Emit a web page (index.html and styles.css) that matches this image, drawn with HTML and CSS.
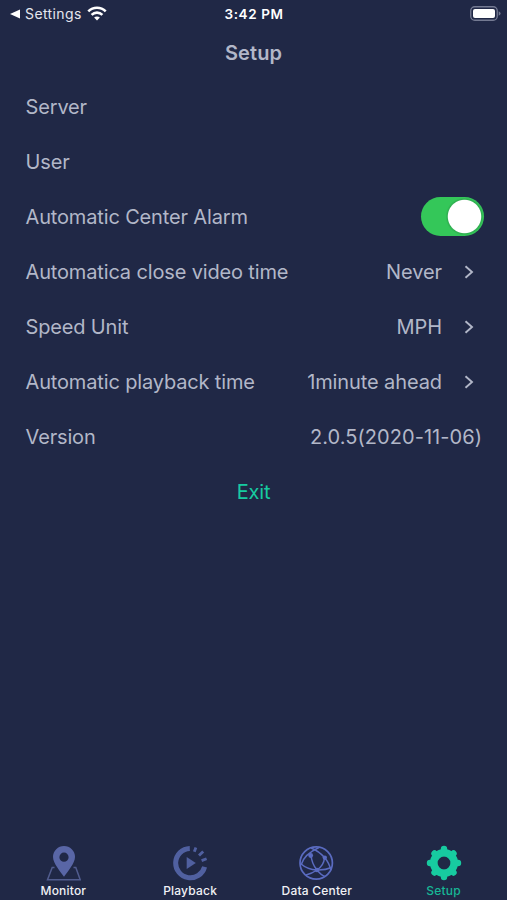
FILE: index.html
```html
<!DOCTYPE html>
<html lang="en">
<head>
    <meta charset="UTF-8">
    <meta name="viewport" content="width=device-width, initial-scale=1.0">
    <title>Setup</title>
    <link rel="stylesheet" href="styles.css">
</head>
<body>
    <!-- Status Bar -->
    <div class="status-bar">
        <div class="status-left">
            <svg class="back-icon" width="10" height="10" viewBox="0 0 10 10"><path d="M0 5L10 0.5V9.5Z" fill="#fff"/></svg>
            <span class="back-label">Settings</span>
            <svg class="wifi-icon" width="20" height="15" viewBox="0 0 20 15" fill="none" stroke="#fff" stroke-width="2.6">
                <path d="M1.3 5.4C6.2 0.6 13.8 0.6 18.7 5.4"/>
                <path d="M4.6 8.9C7.7 5.9 12.3 5.9 15.4 8.9"/>
                <path d="M7.1 11.6C8.7 10 11.3 10 12.9 11.6L10 14.5Z" fill="#fff" stroke="none"/>
            </svg>
        </div>
        <span class="time">3:42 PM</span>
        <div class="status-right">
            <svg width="31" height="15" viewBox="0 0 31 15">
                <rect x="0.75" y="0.75" width="26.5" height="13.5" rx="4" fill="none" stroke="#747a92" stroke-width="1.3"/>
                <rect x="3" y="2.9" width="22" height="9.2" rx="2" fill="#fff"/>
                <path d="M28.7 5.2Q30.6 6 30.6 7.5T28.7 9.8Z" fill="#747a92"/>
            </svg>
        </div>
    </div>

    <h1>Setup</h1>

    <!-- Settings List -->
    <main class="settings">
        <div class="row"><span>Server</span></div>
        <div class="row"><span>User</span></div>
        <div class="row">
            <span>Automatic Center Alarm</span>
            <span class="switch"></span>
        </div>
        <div class="row">
            <span>Automatica close video time</span>
            <span class="value">Never</span>
            <svg class="chevron" width="10" height="14" viewBox="0 0 10 14"><path d="M1.5 1.2L8 7L1.5 12.8"/></svg>
        </div>
        <div class="row">
            <span>Speed Unit</span>
            <span class="value">MPH</span>
            <svg class="chevron" width="10" height="14" viewBox="0 0 10 14"><path d="M1.5 1.2L8 7L1.5 12.8"/></svg>
        </div>
        <div class="row">
            <span>Automatic playback time</span>
            <span class="value">1minute ahead</span>
            <svg class="chevron" width="10" height="14" viewBox="0 0 10 14"><path d="M1.5 1.2L8 7L1.5 12.8"/></svg>
        </div>
        <div class="row">
            <span>Version</span>
            <span class="value version">2.0.5(2020-11-06)</span>
        </div>
        <div class="row exit"><span>Exit</span></div>
    </main>

    <!-- Tab Bar -->
    <nav class="tab-bar">
        <a class="tab">
            <svg width="36" height="36" viewBox="0 0 36 36">
                <path d="M9.5 22.5H7.2L2.5 34.8H35.2L30.8 22.5H28.5" fill="none" stroke="#515c8e" stroke-width="1.5"/>
                <path d="M19 31.8C15.5 26.5 8 18.5 8 12A11 11 0 0 1 30 12C30 18.5 22.5 26.5 19 31.8ZM19 7.6A4.6 4.6 0 1 0 19 16.8A4.6 4.6 0 1 0 19 7.6Z" fill="#5966a6" fill-rule="evenodd"/>
            </svg>
            <span>Monitor</span>
        </a>
        <a class="tab">
            <svg width="36" height="36" viewBox="0 0 36 36">
                <path d="M17.8 3.4A14.7 14.7 0 1 0 32.6 21.8" fill="none" stroke="#5060a0" stroke-width="5"/>
                <path d="M22.3 6.8L23.9 2.4M27 10.6L31.2 6.4M29.6 15.6L34.6 13.7" fill="none" stroke="#5060a0" stroke-width="2.8"/>
                <path d="M14.7 12L23.8 18L14.7 24Z" fill="#5060a0"/>
            </svg>
            <span>Playback</span>
        </a>
        <a class="tab">
            <svg width="36" height="36" viewBox="0 0 36 36" fill="none" stroke="#5a6bc0" stroke-width="1.5">
                <circle cx="17.2" cy="18" r="16.2" stroke-width="1.7"/>
                <path d="M12 3C17 5 22 8.5 25.5 12.5C28.5 16 31 21 31.8 25"/>
                <path d="M20 2.5C10 7 4 13 2 20"/>
                <path d="M12 10C12.5 16 14.5 21 18 25C20.5 28 23 30.5 26 31.5"/>
                <path d="M25.5 13C25 18 22.5 22 18 25C14.5 27.5 11 29 7 30"/>
                <path d="M1.5 18.5C6 22.5 12 24.8 18 25C23 25.2 28 24.5 32.5 22.5"/>
                <g fill="#5a6bc0" stroke="none">
                    <circle cx="11.7" cy="10.5" r="2.4"/>
                    <circle cx="25.8" cy="12.6" r="2.2"/>
                    <circle cx="18" cy="25" r="2.3"/>
                </g>
            </svg>
            <span>Data Center</span>
        </a>
        <a class="tab active">
            <svg width="36" height="36" viewBox="0 0 36 36" fill="none" stroke="#17cba0">
                <circle cx="18" cy="18" r="10.2" stroke-width="7.6"/>
                <path d="M18 8V4M18 28V32M8 18H4M28 18H32M10.9 10.9L8.5 8.5M25.1 25.1L27.5 27.5M25.1 10.9L27.5 8.5M10.9 25.1L8.5 27.5" stroke-width="6.4" stroke-linecap="round"/>
            </svg>
            <span>Setup</span>
        </a>
    </nav>
</body>
</html>
```

FILE: styles.css
```css
body {
    font-family: Inter, "Liberation Sans", sans-serif;
    background-color: #202846;
    color: #b2b7c8;
    margin: 0;
    display: flex;
    flex-direction: column;
    height: 100vh;
}

.status-bar {
    display: grid;
    grid-template-columns: 1fr auto 1fr;
    align-items: center;
    height: 27px;
    padding: 0 6px 0 10px;
    color: #fff;
}

.status-left {
    display: flex;
    align-items: center;
}

.back-label {
    margin: 0 5px 0 5px;
    font-size: 14px;
    letter-spacing: 0.4px;
    color: #e4e6ee;
}

.time {
    margin: 1px 3px 0 0;
    font-size: 13.5px;
    font-weight: 600;
    letter-spacing: 0.6px;
}

.status-right {
    display: flex;
    justify-content: flex-end;
}

h1 {
    margin: 0;
    height: 52px;
    line-height: 52px;
    font-size: 20px;
    font-weight: 600;
    letter-spacing: 0.1px;
    text-align: center;
}

.settings {
    flex: 1;
    font-size: 20px;
    letter-spacing: -0.15px;
}

.row {
    display: flex;
    align-items: center;
    height: 55px;
    padding: 0 33px 0 25.5px;
}

.switch {
    width: 63px;
    height: 39px;
    margin: 0 -10px 0 auto;
    border-radius: 20px;
    background: radial-gradient(circle at 43.5px 19.5px, #fff 16.2px, #2fae50 17.2px, #34c759 19px);
}

.value {
    margin-left: auto;
    letter-spacing: -0.1px;
}

.version {
    margin-right: -8px;
    letter-spacing: 0.05px;
}

.chevron {
    margin-left: 22px;
    fill: none;
    stroke: #b2b7c8;
    stroke-width: 1.9;
}

.exit {
    justify-content: center;
    padding: 0;
    color: #17cba0;
}

.tab-bar {
    display: grid;
    grid-template-columns: repeat(4, 1fr);
    height: 55px;
}

.tab {
    display: flex;
    flex-direction: column;
    align-items: center;
    font-size: 12px;
    font-weight: 500;
    line-height: 20px;
    letter-spacing: 0.2px;
    color: #f0f1f5;
}

.active {
    color: #17b795;
}
```
